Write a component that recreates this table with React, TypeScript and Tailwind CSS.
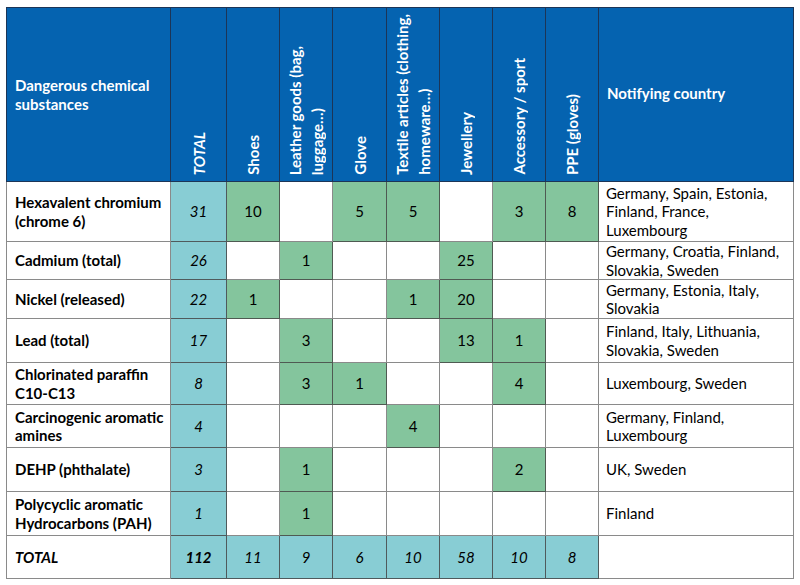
import React from "react";

const cols = [
  { label: ["TOTAL"], italic: true },
  { label: ["Shoes"] },
  { label: ["Leather goods (bag,", "luggage…)"] },
  { label: ["Glove"] },
  { label: ["Textile articles (clothing,", "homeware…)"] },
  { label: ["Jewellery"] },
  { label: ["Accessory / sport"] },
  { label: ["PPE (gloves)"] },
];

const rows: { name: string[]; h: number; cells: (string | null)[]; country: string[] }[] = [
  { name: ["Hexavalent chromium", "(chrome 6)"], h: 60, cells: ["31", "10", null, "5", "5", null, "3", "8"], country: ["Germany, Spain, Estonia,", "Finland, France,", "Luxembourg"] },
  { name: ["Cadmium (total)"], h: 38, cells: ["26", null, "1", null, null, "25", null, null], country: ["Germany, Croatia, Finland,", "Slovakia, Sweden"] },
  { name: ["Nickel (released)"], h: 39, cells: ["22", "1", null, null, "1", "20", null, null], country: ["Germany, Estonia, Italy,", "Slovakia"] },
  { name: ["Lead (total)"], h: 44, cells: ["17", null, "3", null, null, "13", "1", null], country: ["Finland, Italy, Lithuania,", "Slovakia, Sweden"] },
  { name: ["Chlorinated paraffin", "C10-C13"], h: 42, cells: ["8", null, "3", "1", null, null, "4", null], country: ["Luxembourg, Sweden"] },
  { name: ["Carcinogenic aromatic", "amines"], h: 43, cells: ["4", null, null, null, "4", null, null, null], country: ["Germany, Finland,", "Luxembourg"] },
  { name: ["DEHP (phthalate)"], h: 44, cells: ["3", null, "1", null, null, null, "2", null], country: ["UK, Sweden"] },
  { name: ["Polycyclic aromatic", "Hydrocarbons (PAH)"], h: 44, cells: ["1", null, "1", null, null, null, null, null], country: ["Finland"] },
];

const totals = ["112", "11", "9", "6", "10", "58", "10", "8"];

function Lines({ lines }: { lines: string[] }) {
  return (
    <>
      {lines.map((l, j) => (
        <React.Fragment key={j}>
          {j > 0 && <br />}
          {l}
        </React.Fragment>
      ))}
    </>
  );
}

export default function App() {
  const font = { fontFamily: "Lato, 'Liberation Sans', sans-serif" };
  return (
    <div className="w-[800px] h-[585px] bg-white pt-[7px] pl-[6px]" style={font}>
      <table className="border-collapse table-fixed text-[15px] leading-[18.5px] text-black">
        <colgroup>
          <col className="w-[164px]" />
          <col className="w-[56px]" />
          <col className="w-[53px]" />
          <col className="w-[53px]" />
          <col className="w-[54px]" />
          <col className="w-[53px]" />
          <col className="w-[53px]" />
          <col className="w-[53px]" />
          <col className="w-[53px]" />
          <col className="w-[195px]" />
        </colgroup>
        <thead>
          <tr className="h-[174px]">
            <th className="bg-[#0563B0] border border-[#1c3557] text-white text-left font-bold align-middle pl-[8px] leading-[19px]">
              Dangerous chemical
              <br />
              substances
            </th>
            {cols.map((c, i) => (
              <th key={i} className="bg-[#0563B0] border border-[#1c3557] text-white font-bold align-bottom p-0 pb-[6px]">
                <div className="flex justify-center">
                  <div className={`[writing-mode:vertical-rl] rotate-180 text-left whitespace-nowrap leading-[22px] ${c.italic ? "italic" : ""}`}>
                    <Lines lines={c.label} />
                  </div>
                </div>
              </th>
            ))}
            <th className="bg-[#0563B0] border border-[#1c3557] text-white text-left font-bold align-middle pl-[8px] pb-[2px]">
              Notifying country
            </th>
          </tr>
        </thead>
        <tbody>
          {rows.map((r, i) => (
            <tr key={i} style={{ height: r.h }}>
              <td className="border border-[#8a8a8a] font-bold pl-[8px] align-middle">
                <Lines lines={r.name} />
              </td>
              {r.cells.map((v, j) => (
                <td
                  key={j}
                  className={`border text-center align-middle ${
                    j === 0
                      ? "bg-[#88CDD4] border-[#4f5a5c] italic"
                      : v
                      ? "bg-[#84C59D] border-[#4f5a52]"
                      : "border-[#8a8a8a]"
                  }`}
                >
                  {v}
                </td>
              ))}
              <td className="border border-[#8a8a8a] pl-[7px] align-middle">
                <Lines lines={r.country} />
              </td>
            </tr>
          ))}
          <tr className="h-[43px]">
            <td className="border border-[#8a8a8a] font-bold italic pl-[8px] align-middle">TOTAL</td>
            {totals.map((v, j) => (
              <td
                key={j}
                className={`border bg-[#88CDD4] border-[#4f5a5c] italic text-center align-middle ${j === 0 ? "font-bold" : ""}`}
              >
                {v}
              </td>
            ))}
            <td className="border border-[#8a8a8a]"></td>
          </tr>
        </tbody>
      </table>
    </div>
  );
}
